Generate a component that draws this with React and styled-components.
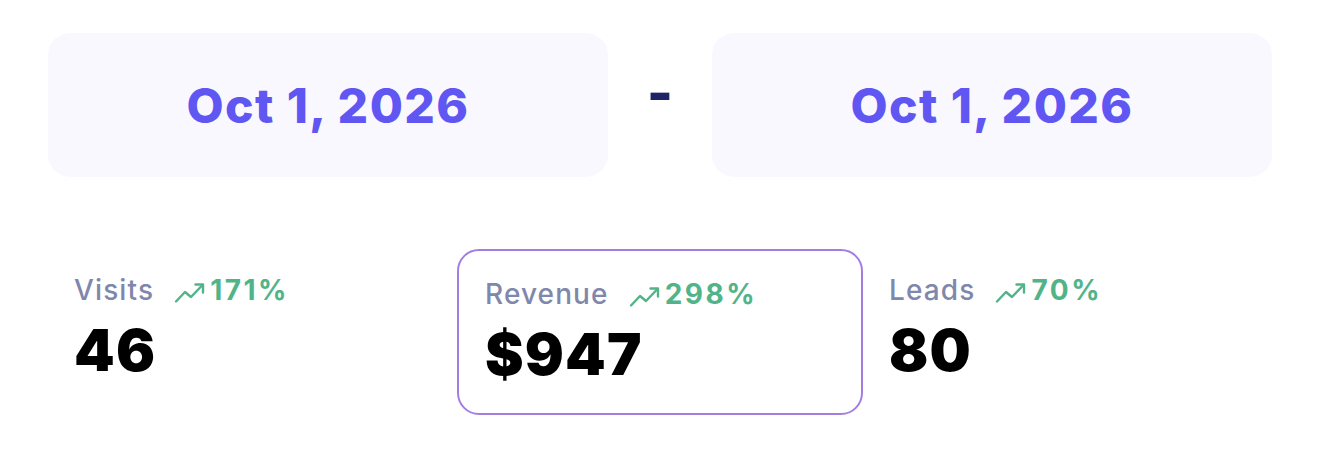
import React from "react";
import styled, { createGlobalStyle } from "styled-components";

const GlobalStyle = createGlobalStyle`
  body {
    margin: 0;
    background: #ffffff;
    font-family: Inter, "Liberation Sans", sans-serif;
  }
`;

const Page = styled.div`
  width: 1320px;
  padding: 33px 48px 0;
  box-sizing: border-box;
`;

const DateRow = styled.div`
  display: flex;
  align-items: center;
`;

const DateBox = styled.div`
  flex: 0 0 560px;
  height: 144px;
  border-radius: 22px;
  background: #f9f8ff;
  display: flex;
  align-items: center;
  justify-content: center;
  font-size: 48px;
  font-weight: 800;
  letter-spacing: 0.03em;
  color: #6056f2;
`;

const Dash = styled.div`
  flex: 1;
  text-align: center;
  font-size: 56px;
  font-weight: 800;
  line-height: 1;
  color: #1e2366;
  margin-top: -24px;
`;

const StatRow = styled.div`
  display: grid;
  grid-template-columns: 409px 406px 409px;
  align-items: start;
  margin-top: 72px;
`;

const StatCard = styled.div`
  height: 166px;
  box-sizing: border-box;
  padding: ${(p) => (p.active ? "27px 26px" : "23px 24px")};
  border: 2px solid ${(p) => (p.active ? "#a47de2" : "transparent")};
  border-radius: 22px;
`;

const LabelRow = styled.div`
  display: flex;
  align-items: center;
  gap: 20px;
  height: 32px;
`;

const Label = styled.span`
  font-size: 28px;
  font-weight: 500;
  letter-spacing: 0.04em;
  color: #7f88ac;
`;

const Change = styled.span`
  display: flex;
  align-items: center;
  gap: 4px;
  font-size: 28px;
  font-weight: 700;
  letter-spacing: 0.09em;
  color: #51b489;

  svg {
    margin-top: 5px;
  }
`;

const Value = styled.div`
  margin-top: 13px;
  font-size: 58px;
  line-height: 62px;
  font-weight: 900;
  letter-spacing: 0.02em;
  color: #000000;
`;

function TrendIcon() {
  return (
    <svg width="32" height="22" viewBox="0 0 32 22" fill="none">
      <polyline
        points="2,19.5 11,10 17,15 28,3.5"
        stroke="#51b489"
        strokeWidth="2.4"
        strokeLinecap="round"
        strokeLinejoin="round"
      />
      <polyline
        points="21.5,2.5 29,2.5 29,10.5"
        stroke="#51b489"
        strokeWidth="2.4"
        strokeLinecap="round"
        strokeLinejoin="round"
      />
    </svg>
  );
}

const stats = [
  { label: "Visits", change: "171%", value: "46" },
  { label: "Revenue", change: "298%", value: "$947", active: true },
  { label: "Leads", change: "70%", value: "80" },
];

export default function App() {
  return (
    <Page>
      <GlobalStyle />
      <DateRow>
        <DateBox>Oct 1, 2026</DateBox>
        <Dash>-</Dash>
        <DateBox>Oct 1, 2026</DateBox>
      </DateRow>
      <StatRow>
        {stats.map((s) => (
          <StatCard key={s.label} active={s.active}>
            <LabelRow>
              <Label>{s.label}</Label>
              <Change>
                <TrendIcon />
                {s.change}
              </Change>
            </LabelRow>
            <Value>{s.value}</Value>
          </StatCard>
        ))}
      </StatRow>
    </Page>
  );
}
